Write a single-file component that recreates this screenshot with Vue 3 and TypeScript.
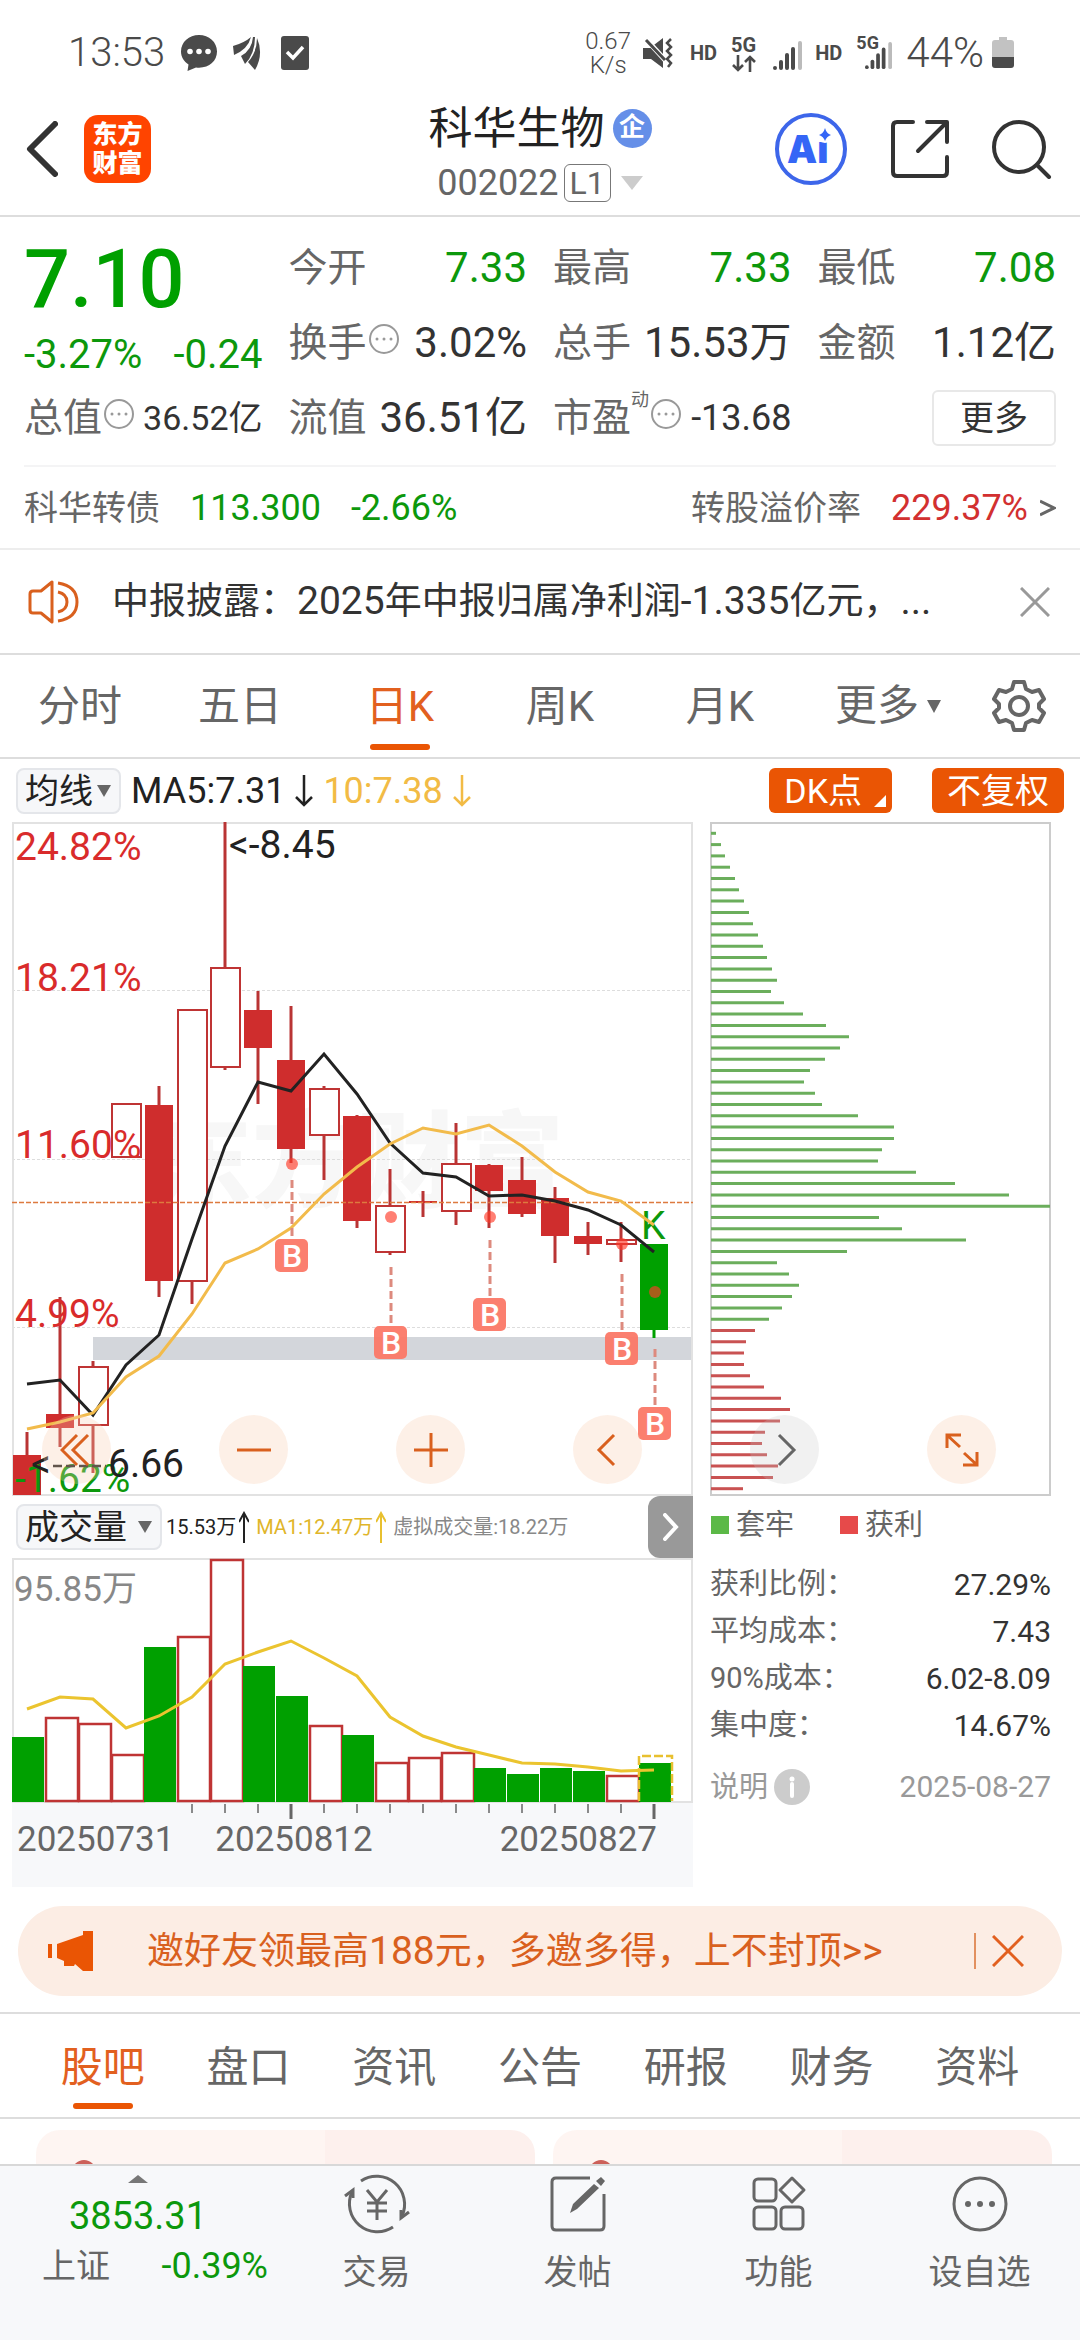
<script setup lang="ts">
import { ref } from 'vue'

type Kind = 'solid' | 'hollow' | 'green'
interface Candle { top: number; bottom: number; high: number; low: number; kind: Kind }

const STEP = 33
const cx = (i: number) => 15 + STEP * i
const toPoints = (ys: number[]) => ys.map((y, i) => `${cx(i)},${y}`).join(' ')

const candle = (top: number, bottom: number, high: number, low: number, kind: Kind): Candle => ({ top, bottom, high, low, kind })
const candles: Candle[] = [
  candle(633, 673, 610, 673, 'solid'),
  candle(592, 606, 475, 625, 'solid'),
  candle(545, 603, 539, 651, 'hollow'),
  candle(282, 335, 282, 335, 'hollow'),
  candle(283, 459, 264, 475, 'solid'),
  candle(188, 459, 188, 482, 'hollow'),
  candle(146, 245, 0, 248, 'hollow'),
  candle(188, 226, 169, 282, 'solid'),
  candle(238, 327, 184, 341, 'solid'),
  candle(267, 313, 264, 358, 'hollow'),
  candle(294, 399, 293, 406, 'solid'),
  candle(384, 430, 347, 433, 'hollow'),
  candle(379, 381, 369, 395, 'solid'),
  candle(342, 389, 301, 403, 'hollow'),
  candle(343, 369, 342, 406, 'solid'),
  candle(358, 392, 335, 395, 'solid'),
  candle(376, 414, 365, 441, 'solid'),
  candle(414, 422, 400, 433, 'solid'),
  candle(418, 422, 400, 440, 'hollow'),
  candle(422, 508, 422, 516, 'green'),
]
const ma5 = toPoints([562, 558, 593, 543, 513, 417, 324, 260, 269, 232, 272, 321, 351, 355, 374, 373, 379, 388, 403, 430])
const ma10 = toPoints([607, 600, 591, 555, 534, 492, 441, 427, 406, 372, 345, 322, 306, 312, 303, 324, 350, 370, 379, 403])

const scaleLabels = [
  { text: '24.82%', y: 38 },
  { text: '18.21%', y: 169 },
  { text: '11.60%', y: 336 },
  { text: '4.99%', y: 505 },
]
const buys = [
  { i: 8, dot: 342, from: 358, box: 417 },
  { i: 11, dot: 395, from: 445, box: 504 },
  { i: 14, dot: 395, from: 418, box: 476 },
  { i: 18, dot: 422, from: 452, box: 510 },
  { i: 19, dot: 470, from: 527, box: 585 },
]

const trapped = [5, 10, 14, 19, 24, 28, 33, 38, 42, 47, 52, 56, 61, 66, 60, 73, 92, 115, 138, 129, 114, 99, 93, 104, 111, 147, 183, 183, 171, 167, 205, 244, 298, 339, 168, 191, 255, 136, 66, 78, 88, 81, 71, 58]
const profit = [44, 35, 33, 33, 39, 53, 70, 79, 69, 54, 51, 56, 67, 62, 32]
const chips = [
  ...trapped.map((w) => ({ w, color: '#6bae5c' })),
  ...profit.map((w) => ({ w, color: '#c95252' })),
]

const volumes: { top: number; up: boolean }[] = [
  [179, 0], [160, 1], [166, 1], [197, 1], [89, 0], [79, 1], [2, 1], [108, 0], [138, 0], [168, 1],
  [177, 0], [205, 1], [200, 1], [195, 1], [210, 0], [216, 0], [210, 0], [213, 0], [218, 1], [205, 0],
].map(([top, up]) => ({ top, up: up === 1 }))
const volMa = toPoints([151, 139, 141, 170, 158, 139, 106, 94, 83, 100, 118, 159, 178, 189, 197, 205, 206, 209, 213, 212])
const ticks = Array.from({ length: 15 }, (_, k) => ({ x: cx(k + 5), long: k === 3 || k === 14 }))

const periods = ['分时', '五日', '日K', '周K', '月K']
const period = ref('日K')
const sections = ['股吧', '盘口', '资讯', '公告', '研报', '财务', '资料']
const section = ref('股吧')
const stats = [
  { k: '获利比例：', v: '27.29%' },
  { k: '平均成本：', v: '7.43' },
  { k: '90%成本：', v: '6.02-8.09' },
  { k: '集中度：', v: '14.67%' },
]
</script>

<template>
  <div class="app" lang="zh-CN">
    <div class="status">
      <span class="clock">13:53</span>
      <svg class="s-chat" width="36" height="36" viewBox="0 0 36 36"><path d="M18 0C8 0 0 7 0 16.500C0 22 3 26.500 7.500 29.500L6.500 36L15 32.500C27 34 36 26.500 36 16.500C36 7 28 0 18 0Z" fill="#4a4a4a" /><g fill="#fff"><circle cx="9" cy="16.500" r="2.800" /><circle cx="18" cy="16.500" r="2.800" /><circle cx="27" cy="16.500" r="2.800" /></g></svg>
      <svg class="s-wing" width="28" height="34" viewBox="0 0 28 34"><g fill="#4a4a4a"><path d="M0 10Q11 7 18 1Q15 13 1 19Z" /><path d="M20 1Q19 14 8 20L12 28Q22 18 22 1Z" /><path d="M24 2Q24 16 15 26L22 34Q31 18 24 2Z" /></g></svg>
      <svg width="28" height="34" viewBox="0 0 28 34"><rect width="28" height="34" rx="3" fill="#4a4a4a" /><path d="M6 16L12 22L22 11" fill="none" stroke="#fff" stroke-width="3.500" /></svg>
      <span class="grow"></span>
      <span class="speed">0.67<br />K/s</span>
      <svg class="s-mute" width="30" height="30" viewBox="0 0 30 30"><path d="M0 10H7L20 0V30L8 21H0Z" fill="#4a4a4a" /><path d="M2 0L22 22" stroke="#fff" stroke-width="5" /><path d="M3 2L22 22" stroke="#4a4a4a" stroke-width="3" /><path d="M28 1L24 5L28 9L24 13L28 17L24 21L28 25L25 29" fill="none" stroke="#4a4a4a" stroke-width="2.500" /></svg>
      <b class="hd">HD</b>
      <span class="net"><b>5G</b><svg width="24" height="17" viewBox="0 0 24 17"><path d="M6 0V15M1 10L6 15L11 10M18 17V2M13 7L18 2L23 7" fill="none" stroke="#4a4a4a" stroke-width="2.600" /></svg></span>
      <svg class="s-sig" width="29" height="29" viewBox="0 0 29 29"><g fill="#4a4a4a"><rect y="25" width="4" height="4" rx="2" /><rect x="6" y="19" width="4" height="10" rx="2" /><rect x="12" y="12" width="4" height="17" rx="2" /><rect x="18" y="6" width="4" height="23" rx="2" /></g><rect x="25" width="4" height="29" rx="2" fill="#bbb" /></svg>
      <b class="hd">HD</b>
      <span class="net2"><b>5G</b><svg width="29" height="27" viewBox="0 0 29 29"><g fill="#4a4a4a"><rect y="25" width="4" height="4" rx="2" /><rect x="6" y="19" width="4" height="10" rx="2" /><rect x="12" y="12" width="4" height="17" rx="2" /><rect x="18" y="6" width="4" height="23" rx="2" /></g><rect x="25" width="4" height="29" rx="2" fill="#bbb" /></svg></span>
      <span class="clock pct">44%</span>
      <svg width="22" height="32" viewBox="0 0 22 32"><path d="M7 0H15V3H19Q22 3 22 6V20H0V6Q0 3 3 3H7Z" fill="#c2c2c2" /><path d="M0 20H22V28Q22 31 19 31H3Q0 31 0 28Z" fill="#4a4a4a" /></svg>
    </div>

    <header class="header">
      <div class="side">
        <button class="icon" aria-label="返回"><svg width="32" height="56" viewBox="0 0 32 56"><path d="M29 3L4 28L29 53" fill="none" stroke="#333" stroke-width="6" stroke-linecap="round" stroke-linejoin="round" /></svg></button>
        <a class="logo" href="#home">东方<br />财富</a>
      </div>
      <div class="title">
        <h1>科华生物<span class="ent">企</span></h1>
        <p>002022<span class="l1">L1</span><svg width="22" height="14" viewBox="0 0 22 14"><path d="M0 0H22L11 14Z" fill="#ccc" /></svg></p>
      </div>
      <div class="side right">
        <button class="icon" aria-label="Ai">
          <svg width="74" height="74" viewBox="0 0 74 74"><circle cx="37" cy="37" r="34" fill="none" stroke="#3d66ea" stroke-width="4" /><text x="13" y="51" class="ai">Ai</text><circle cx="51" cy="22" r="9" fill="#fff" /><path d="M51 16Q52.500 21.500 57 23Q52.500 24.500 51 29Q49.500 24.500 45 23Q49.500 21.500 51 16Z" fill="#3566f6" /></svg>
        </button>
        <button class="icon" aria-label="分享"><svg width="60" height="60" viewBox="0 0 60 60"><path d="M23 3H7Q3 3 3 7V53Q3 57 7 57H53Q57 57 57 53V38M37 3H57V23M56 4L28 32" fill="none" stroke="#333" stroke-width="4" stroke-linecap="round" stroke-linejoin="round" /></svg></button>
        <button class="icon" aria-label="搜索"><svg width="60" height="60" viewBox="0 0 60 60"><circle cx="27" cy="28" r="25" fill="none" stroke="#333" stroke-width="4" /><path d="M45 46L57 58" stroke="#333" stroke-width="4" stroke-linecap="round" /></svg></button>
      </div>
    </header>

    <main class="main">
      <section class="quote">
        <div class="col">
          <div class="price">7.10</div>
          <div class="change"><span>-3.27%</span><span>-0.24</span></div>
          <div class="row"><span class="k">总值<svg class="more" viewBox="0 0 30 30"><circle cx="15" cy="15" r="14" /><circle cx="8" cy="15" r="1.500" /><circle cx="15" cy="15" r="1.500" /><circle cx="22" cy="15" r="1.500" /></svg></span><span class="v small">36.52亿</span></div>
        </div>
        <div class="col">
          <div class="row"><span class="k">今开</span><span class="v down">7.33</span></div>
          <div class="row"><span class="k">换手<svg class="more" viewBox="0 0 30 30"><circle cx="15" cy="15" r="14" /><circle cx="8" cy="15" r="1.500" /><circle cx="15" cy="15" r="1.500" /><circle cx="22" cy="15" r="1.500" /></svg></span><span class="v">3.02%</span></div>
          <div class="row"><span class="k">流值</span><span class="v">36.51亿</span></div>
        </div>
        <div class="col">
          <div class="row"><span class="k">最高</span><span class="v down">7.33</span></div>
          <div class="row"><span class="k">总手</span><span class="v">15.53万</span></div>
          <div class="row"><span class="k">市盈<sup>动</sup><svg class="more" viewBox="0 0 30 30"><circle cx="15" cy="15" r="14" /><circle cx="8" cy="15" r="1.500" /><circle cx="15" cy="15" r="1.500" /><circle cx="22" cy="15" r="1.500" /></svg></span><span class="v mid">-13.68</span></div>
        </div>
        <div class="col">
          <div class="row"><span class="k">最低</span><span class="v down">7.08</span></div>
          <div class="row"><span class="k">金额</span><span class="v">1.12亿</span></div>
          <div class="row end"><button class="more-btn">更多</button></div>
        </div>
      </section>

      <a class="bond" href="#bond">
        <span>科华转债</span><span class="num down">113.300</span><span class="num down">-2.66%</span>
        <span class="grow"></span>
        <span>转股溢价率</span><span class="num up">229.37%</span><svg width="16" height="18" viewBox="0 0 16 18"><path d="M0 2L14 9L0 16" fill="none" stroke="#666" stroke-width="3" /></svg>
      </a>

      <section class="notice">
        <svg width="52" height="44" viewBox="0 0 52 44"><g fill="none" stroke="#d9601e" stroke-width="3"><path d="M24 2V42L13 33H5Q2 33 2 30V14Q2 11 5 11H13Z" stroke-linejoin="round" /><path d="M30 3Q49 6 49 22T30 41M30 12Q39 14 39 22T30 32" /></g></svg>
        <span class="msg">中报披露：<span class="fig">2025</span>年中报归属净利润<span class="fig">-1.335</span>亿元，<span class="fig">...</span></span>
        <button class="icon" aria-label="关闭"><svg width="30" height="30" viewBox="0 0 30 30"><path d="M1 1L29 29M29 1L1 29" stroke="#999" stroke-width="3" /></svg></button>
      </section>

      <nav class="periods">
        <button v-for="p in periods" :key="p" :class="{ on: p === period }" @click="period = p">{{ p }}</button>
        <button class="wide">更多<svg width="14" height="13" viewBox="0 0 14 13"><path d="M0 0H14L7 13Z" fill="#666" /></svg></button>
        <button class="gear" aria-label="设置"><svg width="54" height="52" viewBox="0 0 54 52"><g fill="none" stroke="#666" stroke-width="4" stroke-linejoin="round"><path d="M22 2H32L34 9L40 12L47 10L52 19L47 24V28L52 33L47 42L40 40L34 43L32 50H22L20 43L14 40L7 42L2 33L7 28V24L2 19L7 10L14 12L20 9Z" /><circle cx="27" cy="26" r="9" /></g></svg></button>
      </nav>

      <div class="ma-row">
        <span class="drop"><select aria-label="主图指标"><option>均线</option></select><svg width="14" height="12" viewBox="0 0 14 12"><path d="M0 0H14L7 12Z" fill="#666" /></svg></span>
        <span class="ma">MA5:7.31</span>
        <svg class="arrow" width="18" height="32" viewBox="0 0 18 32"><path d="M9 0V30M1 22L9 30L17 22" fill="none" stroke="#222" stroke-width="2.500" /></svg>
        <span class="ma gold">10:7.38</span>
        <svg class="arrow" width="18" height="32" viewBox="0 0 18 32"><path d="M9 0V30M1 22L9 30L17 22" fill="none" stroke="#f2bb45" stroke-width="2.500" /></svg>
        <span class="grow"></span>
        <button class="tag dk">DK点<svg width="12" height="12" viewBox="0 0 12 12"><path d="M12 0V12H0Z" fill="#fff" /></svg></button>
        <button class="tag">不复权</button>
      </div>

      <section class="charts">
        <div class="left">
          <div class="plot">
            <svg class="full" viewBox="0 0 681 674">
              <text x="136" y="377" class="mark">东方财富</text>
              <g stroke="#ddd" stroke-width="1" stroke-dasharray="3 2"><path d="M0 168.500H681M0 337.500H681M0 505.500H681" /></g>
              <rect x="81" y="515" width="600" height="23" fill="#d3d6db" />
              <rect x="1" y="1" width="679" height="672" fill="none" stroke="#e2e2e2" stroke-width="2" />
              <g v-for="(c, i) in candles" :key="i" :class="c.kind">
                <path :d="`M${cx(i)} ${c.high}V${c.top}M${cx(i)} ${c.bottom}V${c.low}`" class="wick" />
                <rect v-if="c.kind === 'hollow'" :x="cx(i) - 14" :y="c.top" width="29" :height="c.bottom - c.top" />
                <rect v-else :x="cx(i) - 14" :y="c.top" width="28" :height="c.bottom - c.top" />
              </g>
              <path d="M0 380.500H681" stroke="#dd7a3f" stroke-width="1.500" stroke-dasharray="5 2" />
              <polyline :points="ma5" fill="none" stroke="#222" stroke-width="3" />
              <text x="629" y="417" class="lbl green-t">K</text>
              <polyline :points="ma10" fill="none" stroke="#f2bb4b" stroke-width="3" />
              <g v-for="b in buys" :key="b.i" class="buy">
                <circle :cx="cx(b.i) + 1" :cy="b.dot" r="6" />
                <path :d="`M${cx(b.i) + 1} ${b.from}V${b.box - 2}`" />
                <rect :x="cx(b.i) - 16" :y="b.box" width="33" height="33" rx="5" />
                <text :x="cx(b.i) + 1" :y="b.box + 28">B</text>
              </g>
              <text v-for="l in scaleLabels" :key="l.text" x="3" :y="l.y" class="lbl red-t">{{ l.text }}</text>
              <text x="3" y="670" class="lbl green-t">-1.62%</text>
              <text x="217" y="36" class="lbl">&lt;-8.45</text>
              <text x="19" y="655" class="lbl">&lt;</text>
              <path d="M41 644H94" stroke="#222" stroke-width="2.500" stroke-dasharray="9 4" />
              <text x="96" y="655" class="lbl">6.66</text>
            </svg>
            <div class="ctrls">
              <button aria-label="最早"><svg viewBox="0 0 34 34"><path d="M17 2L2 17L17 32M28 2L13 17L28 32" /></svg></button>
              <button aria-label="缩小"><svg viewBox="0 0 34 34"><path d="M0 17H34" /></svg></button>
              <button aria-label="放大"><svg viewBox="0 0 34 34"><path d="M0 17H34M17 0V34" /></svg></button>
              <button aria-label="左移"><svg viewBox="0 0 34 34"><path d="M23 2L8 17L23 32" /></svg></button>
            </div>
          </div>

          <div class="vol-head">
            <span class="drop large"><select aria-label="副图指标"><option>成交量</option></select><svg width="14" height="12" viewBox="0 0 14 12"><path d="M0 0H14L7 12Z" fill="#666" /></svg></span>
            <span class="vt">15.53万</span>
            <svg class="va" width="10" height="32" viewBox="0 0 10 32"><path d="M5 32V2M0 11L5 2L10 11" fill="none" stroke="#222" stroke-width="2" /></svg>
            <span class="vt y">MA1:12.47万</span>
            <svg class="va" width="10" height="32" viewBox="0 0 10 32"><path d="M5 32V2M0 11L5 2L10 11" fill="none" stroke="#e8c02f" stroke-width="2" /></svg>
            <span class="vt g">虚拟成交量:18.22万</span>
            <span class="grow"></span>
            <button class="next" aria-label="更多指标"><svg width="16" height="28" viewBox="0 0 16 28"><path d="M2 2L13 14L2 26" fill="none" stroke="#fff" stroke-width="4" stroke-linecap="round" /></svg></button>
          </div>

          <svg class="full" viewBox="0 0 681 245">
            <path d="M1 245V1H680V245M0 244H681" fill="none" stroke="#e2e2e2" stroke-width="2" />
            <g v-for="(v, i) in volumes" :key="i">
              <rect v-if="v.up" :x="STEP * i + 1" :y="v.top" width="32" :height="243 - v.top" fill="#fff" stroke="#bf3434" stroke-width="2.500" />
              <rect v-else :x="STEP * i" :y="v.top" width="32" :height="244 - v.top" fill="#00a000" />
            </g>
            <path d="M627 243V198H660V243" fill="none" stroke="#e8c02f" stroke-width="2.500" stroke-dasharray="9 3" />
            <polyline :points="volMa" fill="none" stroke="#ebc42f" stroke-width="3" />
            <text x="2" y="43" class="lbl vol">95.85万</text>
          </svg>

          <div class="axis">
            <svg class="full" viewBox="0 0 681 18"><path v-for="t in ticks" :key="t.x" :d="`M${t.x} 1V${t.long ? 16 : 10}`" stroke="#666" :stroke-width="t.long ? 3 : 1.5" /></svg>
            <div class="dates"><span>20250731</span><span>20250812</span><span>20250827</span></div>
          </div>
        </div>

        <div class="rightcol">
          <div class="plot">
            <svg class="full" viewBox="0 0 341 674">
              <rect x="1" y="1" width="339" height="672" fill="none" stroke="#ccc" stroke-width="2" />
              <path v-for="(c, i) in chips" :key="i" :d="`M1 ${11.3 * i + 11.3}h${c.w}`" :stroke="c.color" stroke-width="3" />
            </svg>
            <div class="ctrls">
              <button class="grey" aria-label="右移"><svg viewBox="0 0 34 34"><path d="M11 2L26 17L11 32" /></svg></button>
              <button aria-label="全屏"><svg viewBox="0 0 34 34"><path d="M2 15V2H16M3 3L15 14M32 19V32H18M31 31L19 20" /></svg></button>
            </div>
          </div>
          <div class="legend"><i class="sq g"></i><span>套牢</span><i class="sq r"></i><span>获利</span></div>
          <dl>
            <div v-for="s in stats" :key="s.k"><dt>{{ s.k }}</dt><dd>{{ s.v }}</dd></div>
          </dl>
          <div class="note"><span>说明</span><svg width="36" height="36" viewBox="0 0 36 36"><circle cx="18" cy="18" r="18" fill="#ccc" /><path d="M18 15V27" stroke="#fff" stroke-width="4" stroke-linecap="round" /><circle cx="18" cy="10" r="2.500" fill="#fff" /></svg><span class="grow"></span><time>2025-08-27</time></div>
        </div>
      </section>

      <section class="banner">
        <svg width="46" height="40" viewBox="0 0 46 40"><path d="M0 13H4V27H0ZM9 13L35 4V0H45V40H35L27 33L26 35H16V30L9 27Z" fill="#ea5504" /></svg>
        <a href="#invite">邀好友领最高<span class="fig">188</span>元，多邀多得，上不封顶<span class="fig">&gt;&gt;</span></a>
        <i class="bar"></i>
        <button class="icon" aria-label="关闭"><svg width="32" height="32" viewBox="0 0 32 32"><path d="M1 1L31 31M31 1L1 31" stroke="#e2601f" stroke-width="3" /></svg></button>
      </section>

      <nav class="sections">
        <button v-for="s in sections" :key="s" :class="{ on: s === section }" @click="section = s">{{ s }}</button>
      </nav>

      <section class="cards">
        <div class="card"><i></i></div>
        <div class="card"><i></i></div>
      </section>
    </main>

    <footer class="tabbar">
      <a class="index" href="#index">
        <svg width="20" height="8" viewBox="0 0 20 8"><path d="M10 0L20 8H0Z" fill="#777" /></svg>
        <span class="pt">3853.31</span>
        <span class="ln"><span>上证</span><span class="down num">-0.39%</span></span>
      </a>
      <button>
        <svg width="66" height="60" viewBox="0 0 66 60"><g fill="none" stroke="#666" stroke-width="3"><path d="M17 7A28 28 0 0 1 58 42M49 53A28 28 0 0 1 8 18" /><path d="M1 22L9 16V24M65 38L57 44V36" /><path d="M23 16L33 28L43 16M33 28V46M23 29H43M23 37H43" /></g></svg>
        交易
      </button>
      <button>
        <svg width="60" height="60" viewBox="0 0 60 60"><path d="M42 4H8Q4 4 4 8V52Q4 56 8 56H52Q56 56 56 52V20" fill="none" stroke="#666" stroke-width="3" /><path d="M22 39L25 30L46 10L51 14L29 35ZM48 7L53 3L57 7L53 12Z" fill="#666" /></svg>
        发帖
      </button>
      <button>
        <svg width="60" height="60" viewBox="0 0 60 60"><g fill="none" stroke="#666" stroke-width="3"><rect x="5" y="5" width="22" height="22" rx="4" /><rect x="5" y="33" width="22" height="22" rx="4" /><rect x="32" y="33" width="22" height="22" rx="4" /><path d="M43 4L55 16L43 28L31 16Z" stroke-linejoin="round" /></g></svg>
        功能
      </button>
      <button>
        <svg width="60" height="60" viewBox="0 0 60 60"><circle cx="30" cy="30" r="26" fill="none" stroke="#666" stroke-width="3" /><g fill="#666"><circle cx="18" cy="30" r="3" /><circle cx="30" cy="30" r="3" /><circle cx="42" cy="30" r="3" /></g></svg>
        设自选
      </button>
    </footer>
  </div>
</template>

<style>
body { background: #fff; }
</style>

<style scoped>
.app {
  display: flex; flex-direction: column; height: 100vh; overflow: hidden; background: #fff;
  font-family: Roboto, "Noto Sans CJK SC", sans-serif; color: #333;
}
.app * { box-sizing: border-box; }
button, select { font: inherit; color: inherit; background: none; border: 0; padding: 0; margin: 0; }
a { color: inherit; text-decoration: none; }
h1, p, dl, dt, dd { margin: 0; font-weight: 400; }
svg { display: block; flex: none; }
.grow { flex: 1; }
.down { color: #0c980c; }
.up { color: #d23030; }
.full { width: 100%; height: auto; overflow: visible; }

.status { display: flex; align-items: center; flex: none; height: 82px; padding: 24px 66px 0 68px; color: #4a4a4a; }
.clock { font-size: 40px; line-height: 44px; font-weight: 300; }
.s-chat { margin-left: 16px; }
.s-wing { margin: 0 20px 0 16px; }
.speed { font-size: 24px; line-height: 24px; text-align: center; font-weight: 300; }
.s-mute { margin: 0 17px 0 12px; }
.hd { font-size: 20px; line-height: 24px; }
.net { display: flex; flex-direction: column; align-items: center; margin-left: 14px; }
.net b { font-size: 20px; line-height: 20px; font-weight: 700; }
.s-sig { margin: 4px 13px 0 17px; }
.net2 { position: relative; margin: 4px 13px 0 22px; }
.net2 b { position: absolute; left: -8px; top: -8px; font-size: 18px; line-height: 18px; }
.pct { margin-right: 8px; font-size: 42px; }

.header { display: flex; align-items: center; flex: none; height: 135px; border-bottom: 2px solid #ddd; padding: 0 28px 0 26px; }
.side { flex: 1; display: flex; align-items: center; gap: 26px; }
.side.right { justify-content: flex-end; gap: 42px; }
.logo { width: 67px; height: 68px; border-radius: 14px; background: #ff4400; color: #fff; font-size: 25px; line-height: 29px; font-weight: 900; text-align: center; padding-top: 5px; }
.title { padding: 14px 0 0 2px; }
.title h1, .title p { display: flex; align-items: center; justify-content: center; height: 54px; }
.title h1 { font-size: 44px; line-height: 54px; color: #222; }
.ent { width: 39px; height: 39px; margin-left: 8px; border-radius: 50%; background: #658fe8; color: #fff; font-size: 26px; line-height: 37px; font-weight: 700; text-align: center; }
.title p { font-size: 36px; line-height: 54px; color: #666; }
.l1 { height: 38px; padding: 0 5px; margin: 0 10px 0 5px; border: 1px solid #777; border-radius: 6px; font-size: 32px; line-height: 36px; }
.ai { font: 900 38px Inter, sans-serif; fill: #3566f6; }

.quote { display: grid; grid-template-columns: repeat(4, minmax(0, 1fr)); column-gap: 26px; margin: 0 24px; padding: 13px 0 10px; border-bottom: 2px solid #f4f4f5; }
.price { font-size: 81px; line-height: 99px; font-weight: 500; color: #00a000; }
.change { display: flex; justify-content: space-between; font-size: 40px; line-height: 51px; color: #0c980c; }
.row { display: flex; align-items: center; justify-content: space-between; height: 75px; white-space: nowrap; }
.row.end { justify-content: flex-end; }
.k { display: flex; align-items: center; font-size: 39px; line-height: 60px; color: #666; }
.k sup { align-self: flex-start; font-size: 18px; line-height: 24px; }
.more { width: 30px; height: 30px; margin: 0 0 8px 2px; fill: #999; }
.more circle:first-child { fill: none; stroke: #999; stroke-width: 2; }
.v { font-size: 42px; line-height: 60px; }
.v.small { font-size: 34px; }
.v.mid { font-size: 36px; }
.more-btn { width: 124px; height: 56px; border: 2px solid #e8e8e8; border-radius: 6px; font-size: 34px; line-height: 50px; }

.bond { display: flex; align-items: center; height: 83px; padding: 0 24px; border-bottom: 2px solid #ededed; font-size: 34px; line-height: 48px; color: #666; }
.num { font-size: 36px; }
.bond .num { margin-left: 30px; }
.bond svg { margin-left: 12px; }

.notice { display: flex; align-items: center; height: 105px; padding: 0 30px 0 28px; border-bottom: 2px solid #ddd; }
.msg { flex: 1; margin-left: 32px; font-size: 37px; line-height: 52px; white-space: nowrap; overflow: hidden; }
.fig { font-size: 39px; }
.icon { display: block; flex: none; }

.periods, .sections { display: flex; height: 104px; border-bottom: 2px solid #ddd; font-size: 42px; line-height: 104px; color: #666; }
.periods button { position: relative; width: 160px; }
.periods .wide { display: flex; align-items: center; justify-content: center; gap: 8px; margin-left: 18px; flex: 1; }
.periods .gear { display: flex; align-items: center; justify-content: center; width: 122px; }
.periods .on, .sections .on { color: #e2601f; }
.on::after { content: ""; position: absolute; left: 50%; bottom: 7px; width: 60px; height: 6px; margin-left: -30px; border-radius: 3px; background: #ea5504; }

.ma-row { display: flex; align-items: center; height: 63px; padding: 0 16px; }
.drop { position: relative; display: block; width: 105px; height: 46px; border: 2px solid #e4e6ea; border-radius: 8px; background: #f6f7f9; }
.drop select { display: block; appearance: none; width: 100%; height: 42px; padding: 0 0 0 7px; font-size: 34px; line-height: 42px; color: #222; outline: 0; }
.drop svg { position: absolute; right: 8px; top: 15px; pointer-events: none; }
.ma { margin-left: 10px; font-size: 36px; line-height: 44px; color: #222; }
.gold { color: #f2bb45; }
.arrow { margin-left: 10px; }
.tag { position: relative; height: 45px; padding: 0 15px; border-radius: 6px; background: #ea5504; color: #fff; font-size: 34px; line-height: 42px; }
.dk { padding-right: 30px; margin-right: 40px; }
.dk svg { position: absolute; right: 6px; bottom: 6px; }

.charts { display: grid; grid-template-columns: minmax(0, 681fr) minmax(0, 341fr); column-gap: 17px; padding: 0 29px 0 12px; }
.plot { position: relative; }
.mark { font-size: 104px; font-weight: 900; fill: #f7f7f7; }
.wick { stroke-width: 3; stroke: #b93434; }
.solid rect { fill: #cf2d2d; }
.hollow rect { fill: #fff; stroke: #bf3434; stroke-width: 2; }
.green rect { fill: #00a000; }
.green .wick { stroke: #00a000; }
.lbl { font-size: 39px; fill: #222; }
.red-t { fill: #d92b2b; }
.green-t { fill: #0c980c; }
.lbl.vol { font-size: 35px; fill: #888; }
.buy circle { fill: #ff3b28; fill-opacity: .65; }
.buy path { stroke: #dd8a7e; stroke-width: 3; stroke-dasharray: 8 4; }
.buy rect { fill: #fb7867; fill-opacity: .95; }
.buy text { font-size: 32px; font-weight: 500; fill: #fff; text-anchor: middle; }
.ctrls { position: absolute; left: 30px; bottom: 12px; display: flex; gap: 108px; }
.ctrls button { display: flex; align-items: center; justify-content: center; width: 69px; height: 69px; border-radius: 50%; background: rgba(250, 205, 175, .3); }
.ctrls svg { width: 34px; height: 34px; fill: none; stroke: #d9601e; stroke-width: 3; }
.ctrls .grey { background: rgba(200, 200, 200, .25); }
.ctrls .grey svg { stroke: #666; }
.rightcol .ctrls { left: 40px; }

.vol-head { display: flex; align-items: center; height: 62px; padding-left: 4px; white-space: nowrap; }
.drop.large { width: 146px; }
.vt { margin-left: 4px; font-size: 20px; line-height: 40px; color: #222; }
.vt.y { color: #e0b52a; margin-left: 7px; }
.vt.g { color: #888; margin-left: 7px; }
.va { margin-left: 3px; }
.next { display: flex; align-items: center; justify-content: center; width: 45px; height: 62px; border-radius: 12px 0 0 12px; background: #999; }
.axis { height: 84px; background: #f7f8fa; }
.dates { display: flex; justify-content: space-between; padding: 0 36px 0 5px; font-size: 35px; line-height: 38px; color: #666; }
.dates span:nth-child(2) { margin-right: 86px; }

.legend { display: flex; align-items: center; height: 58px; margin-bottom: 7px; font-size: 29px; line-height: 40px; color: #666; }
.sq { width: 18px; height: 18px; margin: 0 7px 0 1px; }
.sq.g { background: #5bb947; }
.sq.r { background: #e64a4a; margin-left: 46px; }
dl div { display: flex; justify-content: space-between; height: 47px; line-height: 47px; }
dt { font-size: 29px; color: #666; }
dd { font-size: 30px; color: #333; }
.note { display: flex; align-items: center; height: 75px; font-size: 29px; line-height: 40px; color: #999; }
.note svg { margin-left: 6px; }
.note time { font-size: 30px; }

.banner { display: flex; align-items: center; height: 90px; margin: 19px 18px 16px; padding: 0 38px 0 30px; border-radius: 45px; background: #fcede4; color: #d9601e; }
.banner a { flex: 1; margin-left: 53px; font-size: 37px; line-height: 52px; white-space: nowrap; }
.bar { width: 2px; height: 36px; margin-right: 16px; background: #e2905f; }

.sections { height: 107px; padding: 0 30px; border-top: 2px solid #ddd; line-height: 107px; }
.sections button { position: relative; flex: 1; }
.sections .on::after { bottom: 8px; }

.main { flex: 1; min-height: 0; overflow: hidden; }
.cards { display: grid; grid-template-columns: 1fr 1fr; gap: 18px; padding: 11px 28px 0 36px; }
.card { height: 120px; padding: 30px 36px; border-radius: 24px; background: linear-gradient(90deg, #fef5f2 58%, #fdf0ed 58%); }
.card i { display: block; width: 24px; height: 24px; border-radius: 50%; background: #cc6059; }

.tabbar { display: flex; flex: none; height: 176px; border-top: 2px solid #d8d8d8; background: #f7f8fa; color: #666; font-size: 34px; line-height: 48px; }
.tabbar > button { flex: 1; display: flex; flex-direction: column; align-items: center; padding-top: 8px; gap: 14px; }
.tabbar .index { display: flex; flex-direction: column; align-items: center; width: 276px; padding-top: 9px; }
.pt { margin-top: 9px; font-size: 38px; line-height: 48px; color: #0c980c; }
.ln { display: flex; justify-content: space-between; width: 226px; margin: 2px 0 0 34px; }
</style>
